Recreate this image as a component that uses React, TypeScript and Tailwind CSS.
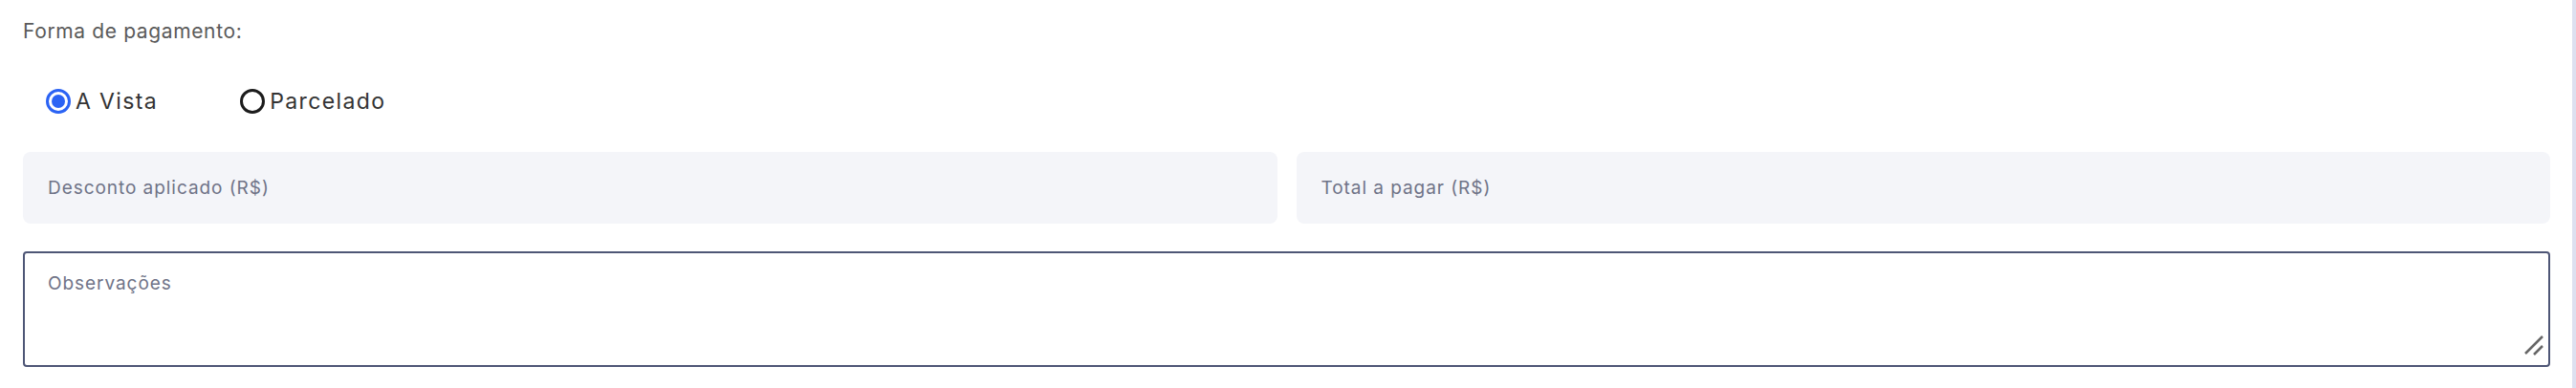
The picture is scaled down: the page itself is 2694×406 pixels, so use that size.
import React, { useState } from 'react';

const font = { fontFamily: 'Inter, "Noto Sans", sans-serif' };

function Radio({ checked, label, onClick }: { checked: boolean; label: string; onClick: () => void }) {
  return (
    <label className="flex items-center gap-[5px] cursor-pointer" onClick={onClick}>
      {checked ? (
        <span className="flex h-[26px] w-[26px] items-center justify-center rounded-full border-[3px] border-[#2b63f4] bg-white">
          <span className="h-[14px] w-[14px] rounded-full bg-[#2b63f4]" />
        </span>
      ) : (
        <span className="h-[26px] w-[26px] rounded-full border-[3.5px] border-[#1c1c1c] bg-white" />
      )}
      <span className="text-[23px] tracking-[0.06em] text-[#333333]">{label}</span>
    </label>
  );
}

export default function App() {
  const [payment, setPayment] = useState<'vista' | 'parcelado'>('vista');

  return (
    <div className="flex h-[406px] w-full bg-white" style={font}>
      <div className="flex-1 pl-6 pr-[23px] pt-[20px]">
        <p className="text-[21px] leading-[26px] tracking-[0.03em] text-[#5a5a5a]">Forma de pagamento:</p>

        {/* payment options */}
        <div className="mt-[43px] flex items-center gap-[86px] pl-6">
          <Radio checked={payment === 'vista'} label="A Vista" onClick={() => setPayment('vista')} />
          <Radio checked={payment === 'parcelado'} label="Parcelado" onClick={() => setPayment('parcelado')} />
        </div>

        <div className="mt-[35px] grid grid-cols-2 gap-5">
          <input
            className="h-[75px] rounded-lg bg-[#f4f5f9] px-[26px] text-[19px] tracking-[0.05em] text-[#333] placeholder:text-[#6f7387] outline-none"
            placeholder="Desconto aplicado (R$)"
          />
          <input
            className="h-[75px] rounded-lg bg-[#f4f5f9] px-[26px] text-[19px] tracking-[0.05em] text-[#333] placeholder:text-[#6f7387] outline-none"
            placeholder="Total a pagar (R$)"
          />
        </div>

        <div className="relative mt-[29px]">
          <textarea
            className="block h-[121px] w-full resize-none rounded-[4px] border-2 border-[#4e5676] bg-white px-[24px] pt-[18px] text-[19px] tracking-[0.05em] text-[#333] placeholder:text-[#6f7387] outline-none"
            placeholder="Observações"
          />
          <svg className="pointer-events-none absolute bottom-[12px] right-[6px]" width="22" height="22" viewBox="0 0 22 22">
            <line x1="2" y1="20" x2="20" y2="2" stroke="#666" strokeWidth="2.5" />
            <line x1="11" y1="21" x2="20" y2="12" stroke="#666" strokeWidth="2.5" />
          </svg>
        </div>
      </div>
      <div className="w-1 bg-[#dde0f0]" />
    </div>
  );
}
